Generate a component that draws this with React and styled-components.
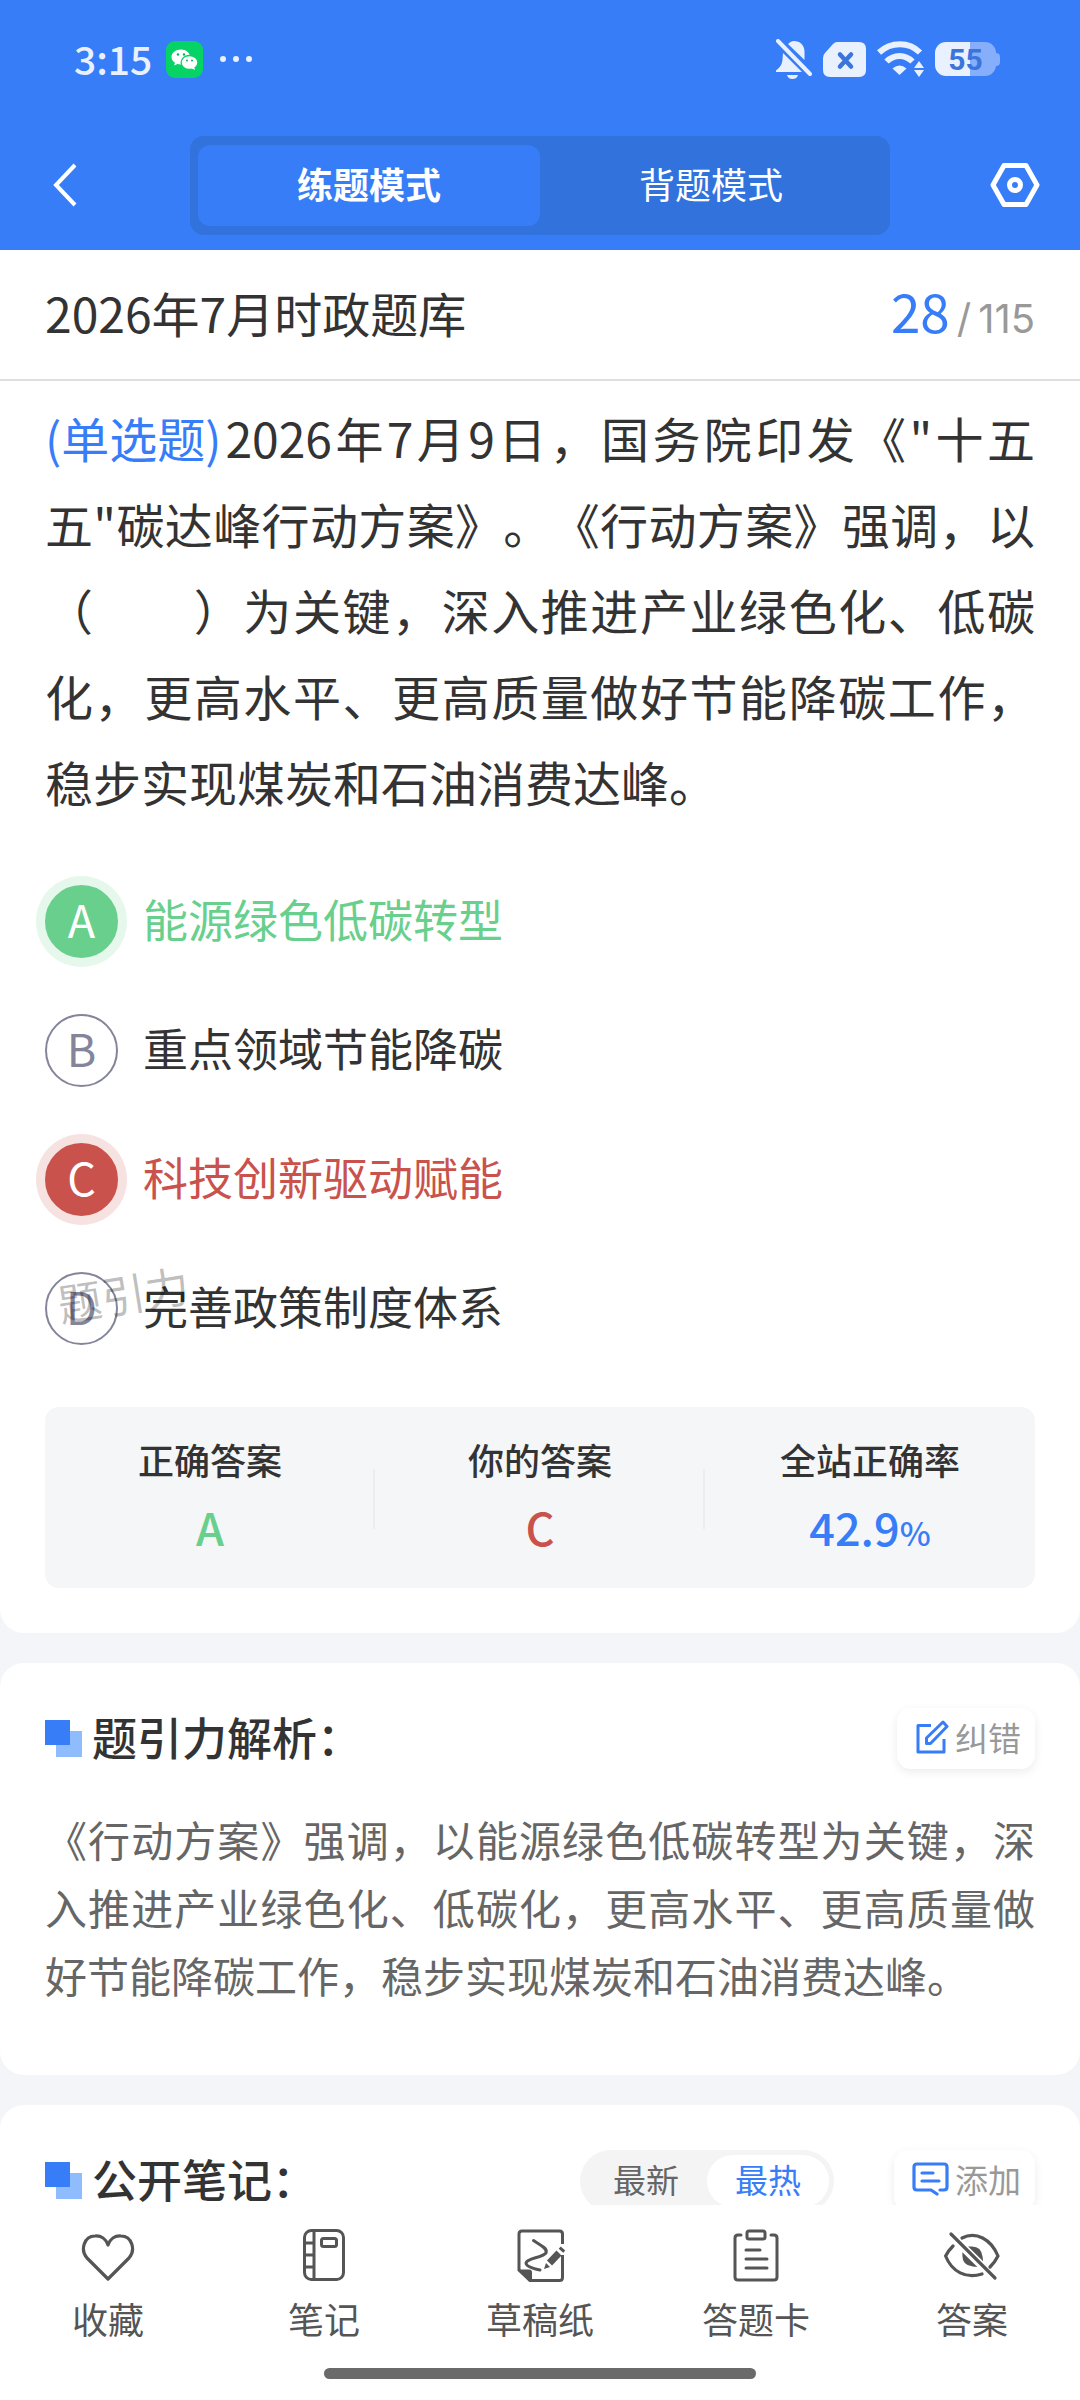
import React, { useState } from 'react';
import styled, { createGlobalStyle } from 'styled-components';

const GlobalStyle = createGlobalStyle`
* { box-sizing: border-box; margin: 0; padding: 0; }
body {
    background: #f3f5f8;
    color: #333;
    font-family: "Noto Sans CJK SC", "Noto Sans", sans-serif;
    text-spacing-trim: space-all;
}
button {
    border: none;
    background: none;
    font: inherit;
    color: inherit;
    cursor: pointer;
}
svg { display: block; flex: none; }
`;

const Page = styled.div`
height: 100vh;
display: flex;
flex-direction: column;
`;

/* header */
const Header = styled.header`
background: #387df8;
color: #fff;
`;
const StatusBar = styled.div`
height: 118px;
padding: 0 80px 0 74px;
display: flex;
align-items: center;
color: #eaf1fe;
`;
const Time = styled.span`
font-size: 39px;
font-weight: 500;
line-height: 40px;
padding-bottom: 2px;
margin-right: 14px;
`;
const Dots = styled.span`
display: flex;
gap: 7px;
margin-left: 17px;
i {
    width: 6px;
    height: 6px;
    border-radius: 50%;
    background: #eaf1fe;
}
`;
const StatusIcons = styled.div`
margin-left: auto;
display: flex;
align-items: center;
gap: 11px;
`;
const Battery = styled.div`
width: 61px;
height: 34px;
border-radius: 11px;
background: linear-gradient(90deg, #eaf1fe 58%, #86aefb 58%);
color: #3a75dd;
font-family: Roboto, sans-serif;
font-size: 30px;
font-weight: 700;
line-height: 35px;
text-align: center;
`;
const BatteryCap = styled.i`
width: 4px;
height: 13px;
margin-left: -11px;
border-radius: 0 4px 4px 0;
background: #86aefb;
`;
const NavBar = styled.div`
height: 132px;
padding: 2px 40px 0;
display: flex;
align-items: center;
justify-content: space-between;
`;
const IconButton = styled.button`
width: 50px;
display: flex;
justify-content: center;
`;
const Modes = styled.div`
display: flex;
width: 70%;
padding: 9px 8px;
border-radius: 14px;
background: #3272dc;
`;
const ModeTab = styled.button`
flex: 1;
height: 81px;
border-radius: 12px;
padding-bottom: 4px;
font-size: 36px;
line-height: 40px;
font-weight: ${p => (p.$active ? 700 : 400)};
background: ${p => (p.$active ? '#387df8' : 'transparent')};
`;
const TitleRow = styled.div`
height: 131px;
padding: 30px 45px 0;
display: flex;
align-items: baseline;
justify-content: space-between;
background: #fff;
border-bottom: 2px solid #dfdfe1;
h1 {
    font-size: 48px;
    font-weight: 400;
    line-height: 60px;
}
`;
const Progress = styled.p`
display: flex;
align-items: baseline;
gap: 7px;
font-family: Inter, sans-serif;
font-size: 40px;
line-height: 60px;
color: #999;
b {
    font-family: "Noto Sans CJK SC", sans-serif;
    font-size: 53px;
    font-weight: 400;
    color: #387df8;
}
`;

/* content */
const Main = styled.main`
flex: 1;
min-height: 0;
overflow: auto;
scrollbar-width: none;
display: flex;
flex-direction: column;
gap: 30px;
`;
const Card = styled.section`
flex: none;
background: #fff;
border-radius: 24px;
padding: 45px 45px 66px;
`;
const QuestionCard = styled(Card)`
border-radius: 0 0 24px 24px;
padding: 13px 45px 45px;
`;
const Question = styled.p`
font-size: 48px;
line-height: 86px;
text-align: justify;
em {
    display: inline-block;
    font-style: normal;
    color: #387df8;
    margin-right: 4px;
}
`;
const Options = styled.div`
position: relative;
display: flex;
flex-direction: column;
gap: 56px;
margin-top: 61px;
`;
const tones = {
    right: '#68d08c',
    wrong: '#ca524c',
};
const Option = styled.button`
display: flex;
align-items: flex-start;
gap: 25px;
font-size: 45px;
line-height: 67px;
text-align: left;
color: ${p => tones[p.$state] || '#333'};
`;
const Letter = styled.span`
width: 73px;
height: 73px;
border-radius: 50%;
line-height: 63px;
text-align: center;
border: 2px solid ${p => tones[p.$state] || '#84859a'};
background: ${p => tones[p.$state] || 'transparent'};
color: ${p => (p.$state ? '#fff' : '#84859a')};
box-shadow: ${p => (p.$state ? `0 0 0 9px ${tones[p.$state]}2b` : 'none')};
`;
const Watermark = styled.span`
position: absolute;
left: 12px;
bottom: 22px;
font-size: 44px;
line-height: 60px;
color: rgba(0, 0, 0, 0.26);
transform: rotate(-9deg);
pointer-events: none;
`;
const Stats = styled.dl`
display: grid;
grid-template-columns: repeat(3, 1fr);
align-items: center;
margin-top: 62px;
height: 181px;
padding-bottom: 10px;
border-radius: 14px;
background: #f4f6f8;
text-align: center;
`;
const Stat = styled.div`
position: relative;
&:not(:first-child)::before {
    content: '';
    position: absolute;
    left: -2px;
    top: 44px;
    width: 2px;
    height: 60px;
    background: #ebedf1;
}
dt {
    font-size: 36px;
    font-weight: 500;
    line-height: 68px;
}
dd {
    font-size: 45px;
    font-weight: 500;
    line-height: 68px;
    color: ${p => p.$color};
}
small {
    font-size: 33px;
    line-height: 33px;
}
`;
const SectionHead = styled.div`
display: flex;
align-items: center;
height: 61px;
h2 {
    font-size: 45px;
    font-weight: 500;
    line-height: 56px;
    padding-bottom: 4px;
    margin-left: 10px;
    margin-right: auto;
}
`;
const SmallButton = styled.button`
display: flex;
align-items: center;
gap: 6px;
height: 61px;
padding: 0 14px 3px 18px;
border-radius: 14px;
background: #fff;
box-shadow: 0 3px 10px rgba(0, 0, 0, 0.08);
font-size: 33px;
line-height: 48px;
color: #999;
`;
const Explain = styled.p`
margin-top: 36px;
font-size: 42px;
line-height: 68px;
text-align: justify;
color: #666;
`;
const Sort = styled.div`
display: flex;
padding: 5px;
border-radius: 31px;
background: #f4f4f5;
margin-right: 60px;
`;
const SortTab = styled.button`
width: 122px;
height: 52px;
border-radius: 26px;
padding-bottom: 3px;
font-size: 33px;
line-height: 48px;
color: ${p => (p.$active ? '#387df8' : '#666')};
background: ${p => (p.$active ? '#fff' : 'transparent')};
`;

/* bottom */
const Footer = styled.footer`
height: 195px;
background: #fff;
display: flex;
flex-direction: column;
align-items: center;
`;
const Tools = styled.nav`
width: 100%;
display: grid;
grid-template-columns: repeat(5, 1fr);
padding-top: 23px;
`;
const Tool = styled.button`
display: flex;
flex-direction: column;
align-items: center;
gap: 6px;
font-size: 36px;
line-height: 60px;
color: #555;
`;
const HomeBar = styled.div`
width: 40%;
height: 11px;
border-radius: 6px;
background: #6a6a6a;
margin-top: 20px;
`;

//icons
const WechatIcon = () => (
    <svg width="37" height="37" viewBox="0 0 37 37">
        <rect width="37" height="37" rx="9" fill="#05d366" />
        <path d="M15 8.500c-5.300 0-9.500 3.300-9.500 7.500 0 2.300 1.300 4.300 3.400 5.700l-.7 2.700 3.200-1.500c1.100.3 2.400.5 3.600.5 5.300 0 9-3.300 9-7.400S20.300 8.500 15 8.500z" fill="#fff" />
        <ellipse cx="23.500" cy="21.500" rx="8.400" ry="7" fill="#fff" stroke="#05d366" strokeWidth="1.300" />
        <path d="M25 27l4 2-.8-3z" fill="#fff" />
        <g fill="#05b558">
            <circle cx="12" cy="13.500" r="1.200" />
            <circle cx="18" cy="13.500" r="1.200" />
            <circle cx="21" cy="19.500" r="1" />
            <circle cx="26" cy="19.500" r="1" />
        </g>
    </svg>
);
const MuteIcon = () => (
    <svg width="36" height="40" viewBox="0 0 36 40" fill="#eaf1fe">
        <path d="M12 5C14 3 16 2 18 2c6 0 10 4 10.500 10v9z" />
        <path d="M7 14L26 33H0v-1.500c4-3 6-6 6.500-11z" />
        <path d="M11 36h11c-1 3-3 4-5.500 4S12 39 11 36z" />
        <path d="M2 2L34 35" stroke="#eaf1fe" strokeWidth="4" strokeLinecap="round" />
    </svg>
);
const NoSimIcon = () => (
    <svg width="43" height="35" viewBox="0 0 43 35">
        <path d="M14 0H36q7 0 7 7V28q0 7-7 7H7q-7 0-7-7V16q0-3 2-5L10 2q2-2 4-2z" fill="#eaf1fe" />
        <path d="M17 12.500L28 24.500M28 12.500L17 24.500" stroke="#3a75dd" strokeWidth="4.500" strokeLinecap="round" />
    </svg>
);
const WifiIcon = () => (
    <svg width="47" height="36" viewBox="0 0 47 36" fill="none">
        <path d="M2 11.500C14 .500 32 .500 43 11.500" stroke="#eaf1fe" strokeWidth="6" />
        <path d="M9.500 20.500C17 13 28 13 35.500 20.500" stroke="#eaf1fe" strokeWidth="6" />
        <path d="M15.500 27.500Q22.500 21.500 29.500 27.500L22.500 34z" fill="#eaf1fe" />
        <path d="M42 20l5 7H37zM42 36l-5-7h10z" fill="#eaf1fe" />
    </svg>
);
const BackIcon = () => (
    <svg width="24" height="44" viewBox="0 0 24 44" fill="none">
        <path d="M22 2L3 22L22 42" stroke="#fff" strokeWidth="4" />
    </svg>
);
const SettingIcon = () => (
    <svg width="50" height="46" viewBox="0 0 50 46" fill="none" stroke="#fff" strokeWidth="5" strokeLinejoin="round">
        <path d="M14 3.500H36L47 23L36 42.500H14L3 23z" />
        <circle cx="25" cy="23" r="5.500" />
    </svg>
);
const SquaresIcon = () => (
    <svg width="37" height="37" viewBox="0 0 37 37">
        <rect x="11" y="11" width="26" height="26" fill="#8ebcfc" />
        <rect width="25" height="25" fill="#387df8" />
    </svg>
);
const EditIcon = () => (
    <svg width="34" height="34" viewBox="0 0 34 34" fill="none" stroke="#387df8" strokeWidth="3" strokeLinejoin="round">
        <path d="M16 5.500H3V32H29V19" />
        <path d="M11.500 18L28 2L32 6.500L15.500 23.500H11.500z" />
    </svg>
);
const CommentIcon = () => (
    <svg width="37" height="34" viewBox="0 0 37 34" fill="none" stroke="#387df8" strokeWidth="3.200" strokeLinecap="round">
        <path d="M28 28h4q3 0 3-3V5q0-3-3-3H5Q2 2 2 5V25q0 3 3 3H19L25 32" />
        <path d="M10 11H21M10 19H27" />
    </svg>
);
const HeartIcon = () => (
    <svg width="54" height="54" viewBox="0 0 54 54" fill="none" stroke="#555" strokeWidth="3.200" strokeLinejoin="round">
        <path d="M27 51L6 30C-1 22 3 8 14 8C20 7.500 25 11 27 17C29 11 34 7.500 40 8C51 8 55 22 48 30z" />
    </svg>
);
const NoteIcon = () => (
    <svg width="54" height="54" viewBox="0 0 54 54" fill="none" stroke="#555" strokeWidth="3">
        <rect x="7.500" y="2.500" width="39" height="49" rx="7" />
        <path d="M17 2.500V51.500M7.500 15H17M7.500 27H17M7.500 39H17" />
        <rect x="24.500" y="10.500" width="15" height="8" rx="2" />
    </svg>
);
const DraftIcon = () => (
    <svg width="54" height="54" viewBox="0 0 54 54" fill="none" stroke="#555" strokeWidth="3">
        <path d="M49.500 16V6q0-3-3-3H9Q6 3 6 6V42L17 52.500H46.500q3 0 3-3V27" />
        <path d="M5 41.500h11q3 0 3 3v9h-3z" fill="#555" stroke="none" />
        <path d="M20.500 12.500C27 17 35 20 33 25C29 30 14 30 13 35C13 39 22 41 27 42" strokeLinecap="round" />
        <path d="M36.500 35L46 25" strokeWidth="7" />
        <path d="M48 22.800L50 20.500" strokeWidth="6" />
        <path d="M31 41l2-6 4 4z" fill="#555" stroke="none" />
    </svg>
);
const SheetIcon = () => (
    <svg width="54" height="54" viewBox="0 0 54 54" fill="none" stroke="#555" strokeWidth="3" strokeLinecap="round">
        <path d="M12 7H9Q6 7 6 10V49q0 3 3 3H45q3 0 3-3V10q0-3-3-3H42" />
        <rect x="18" y="3" width="18" height="8" rx="2" />
        <path d="M17 22H31M17 31H38M17 40H38" />
    </svg>
);
const HideIcon = () => (
    <svg width="56" height="54" viewBox="0 0 56 54" fill="none" stroke="#555" strokeWidth="3.200" strokeLinecap="round">
        <path d="M18 10C32 3 47 11 54 28Q51 34 46 39" />
        <path d="M9 18Q4 23 1.600 28C8 44 22 51 38 46" />
        <path d="M7 6L51 50" />
        <path d="M28 20q8 0 9 9z" fill="#555" />
        <path d="M20 28q0 8 9 9z" fill="#555" />
    </svg>
);

const options = [
    { key: 'A', text: '能源绿色低碳转型', state: 'right' },
    { key: 'B', text: '重点领域节能降碳' },
    { key: 'C', text: '科技创新驱动赋能', state: 'wrong' },
    { key: 'D', text: '完善政策制度体系' },
];
const tools = [
    { name: '收藏', Icon: HeartIcon },
    { name: '笔记', Icon: NoteIcon },
    { name: '草稿纸', Icon: DraftIcon },
    { name: '答题卡', Icon: SheetIcon },
    { name: '答案', Icon: HideIcon },
];

const App = () => {
    const [mode, setMode] = useState('练题模式');
    const [sort, setSort] = useState('最热');
    return (
        <Page>
            <GlobalStyle />
            <Header>
                <StatusBar>
                    <Time>3:15</Time>
                    <WechatIcon />
                    <Dots><i /><i /><i /></Dots>
                    <StatusIcons>
                        <MuteIcon />
                        <NoSimIcon />
                        <WifiIcon />
                        <Battery>55</Battery>
                        <BatteryCap />
                    </StatusIcons>
                </StatusBar>
                <NavBar>
                    <IconButton aria-label="返回"><BackIcon /></IconButton>
                    <Modes>
                        {['练题模式', '背题模式'].map(m => (
                            <ModeTab key={m} $active={mode === m} onClick={() => setMode(m)}>{m}</ModeTab>
                        ))}
                    </Modes>
                    <IconButton aria-label="设置"><SettingIcon /></IconButton>
                </NavBar>
            </Header>
            <TitleRow>
                <h1>2026年7月时政题库</h1>
                <Progress><b>28</b><span>/</span><span>115</span></Progress>
            </TitleRow>
            <Main>
                <QuestionCard>
                    <Question>
                        <em>(单选题)</em>2026年7月9日，国务院印发《"十五五"碳达峰行动方案》。《行动方案》强调，以（　　）为关键，深入推进产业绿色化、低碳化，更高水平、更高质量做好节能降碳工作，稳步实现煤炭和石油消费达峰。
                    </Question>
                    <Options>
                        {options.map(o => (
                            <Option key={o.key} $state={o.state}>
                                <Letter $state={o.state}>{o.key}</Letter>
                                {o.text}
                            </Option>
                        ))}
                        <Watermark>题引力</Watermark>
                    </Options>
                    <Stats>
                        <Stat $color="#68d08c"><dt>正确答案</dt><dd>A</dd></Stat>
                        <Stat $color="#ca524c"><dt>你的答案</dt><dd>C</dd></Stat>
                        <Stat $color="#387df8"><dt>全站正确率</dt><dd>42.9<small>%</small></dd></Stat>
                    </Stats>
                </QuestionCard>
                <Card>
                    <SectionHead>
                        <SquaresIcon />
                        <h2>题引力解析：</h2>
                        <SmallButton><EditIcon />纠错</SmallButton>
                    </SectionHead>
                    <Explain>
                        《行动方案》强调，以能源绿色低碳转型为关键，深入推进产业绿色化、低碳化，更高水平、更高质量做好节能降碳工作，稳步实现煤炭和石油消费达峰。
                    </Explain>
                </Card>
                <Card>
                    <SectionHead>
                        <SquaresIcon />
                        <h2>公开笔记：</h2>
                        <Sort>
                            {['最新', '最热'].map(s => (
                                <SortTab key={s} $active={sort === s} onClick={() => setSort(s)}>{s}</SortTab>
                            ))}
                        </Sort>
                        <SmallButton><CommentIcon />添加</SmallButton>
                    </SectionHead>
                </Card>
            </Main>
            <Footer>
                <Tools>
                    {tools.map(({ name, Icon }) => (
                        <Tool key={name}><Icon />{name}</Tool>
                    ))}
                </Tools>
                <HomeBar />
            </Footer>
        </Page>
    );
};

export default App;
